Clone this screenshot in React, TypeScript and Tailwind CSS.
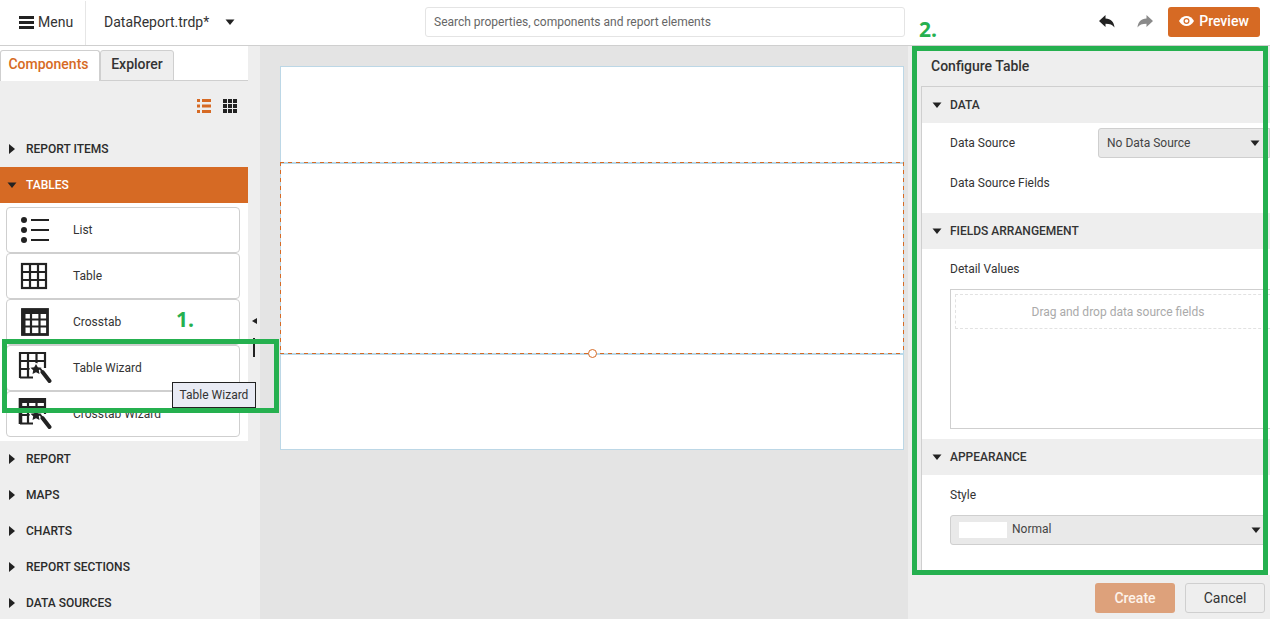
import React from "react";

const Tri = ({ dir = "down", className = "" }: { dir?: "down" | "right" | "left"; className?: string }) => (
  <svg width="10" height="10" viewBox="0 0 10 10" className={className} fill="currentColor">
    {dir === "down" && <path d="M.5 2.500h9L5 8z" />}
    {dir === "right" && <path d="M2 0v10l6-5z" />}
    {dir === "left" && <path d="M8 2v6L3 5z" />}
  </svg>
);

const GridIcon = ({ thick = false }: { thick?: boolean }) => (
  <svg width="30" height="28" viewBox="0 0 30 28" fill="none" stroke="#222" strokeWidth="2.2">
    {thick ? (
      <>
        <rect x="2.500" y="1.500" width="25" height="25" strokeWidth="2.800" />
        <path d="M2 4h26" strokeWidth="4" />
        <path d="M2 11.500h26M2 18.500h26M11 1v26M19.500 1v26" />
        <path d="M3.500 1v26" strokeWidth="4" />
      </>
    ) : (
      <>
        <rect x="2" y="2" width="24" height="24" />
        <path d="M2 10h24M2 18h24M10 2v24M18 2v24" />
      </>
    )}
  </svg>
);

const WizardIcon = ({ thick = false }: { thick?: boolean }) => (
  <svg width="34" height="34" viewBox="0 0 34 34" fill="none">
    <g stroke="#222" strokeWidth="2.200">
      {thick && <path d="M1 3.500h26" strokeWidth="5" />}
      <path d="M2 27V2h25v15M2 10h25M2 18h11M2 26.500h13M10 2v25M18.500 2v11" />
      {thick && <path d="M2.500 1v26" strokeWidth="3.500" />}
    </g>
    <circle cx="18" cy="18.500" r="6.500" fill="#fff" />
    <path d="M18 13l1.800 3.300 3.700.5-2.700 2.500.7 3.700-3.500-1.800-3.500 1.800.7-3.700-2.700-2.500 3.700-.5z" fill="#222" />
    <path d="M24.500 21l7 9" stroke="#222" strokeWidth="4" strokeLinecap="round" />
    <path d="M22 17.500l2 2.500" stroke="#222" strokeWidth="2" />
  </svg>
);

const ListIcon = () => (
  <svg width="30" height="28" viewBox="0 0 30 28" fill="#222">
    <circle cx="4" cy="4" r="3" />
    <circle cx="4" cy="14" r="3" />
    <circle cx="4" cy="24" r="3" />
    <path d="M11 3h18v2H11zM11 13h18v2H11zM11 23h18v2H11z" />
  </svg>
);

const Section = ({ label, open = false }: { label: string; open?: boolean }) => (
  <div className={`h-9 shrink-0 flex items-center text-xs font-medium ${open ? "bg-[#d66a24] text-white" : "text-[#2b2b2b]"}`}>
    <span className="w-[26px] pl-[7px] flex text-[#222]">
      <Tri dir={open ? "down" : "right"} />
    </span>
    {label}
  </div>
);

const Item = ({ icon, label }: { icon: React.ReactNode; label: string }) => (
  <div className="h-[46px] shrink-0 bg-white border border-[#cfcfcf] rounded-sm flex items-center text-xs text-[#333]">
    <div className="w-[66px] flex justify-center pr-[10px]">{icon}</div>
    {label}
  </div>
);

const PanelHead = ({ label }: { label: string }) => (
  <div className="h-9 bg-[#eeeeee] flex items-center text-xs font-medium text-[#333]">
    <span className="w-7 pl-[10px] flex text-[#222]">
      <Tri />
    </span>
    {label}
  </div>
);

export default function App() {
  return (
    <div
      className="relative w-[1270px] h-[619px] overflow-hidden bg-white flex flex-col text-[#333]"
      style={{ fontFamily: "Roboto, sans-serif" }}
    >
      {/* top bar */}
      <header className="h-[46px] shrink-0 bg-white border-b border-[#cfcfcf] flex items-center pb-[2px]">
        <div className="w-[86px] h-[44px] -mb-[2px] border-r border-[#e6e6e6] flex items-center pl-[19px] gap-[4px] text-sm text-[#333] pb-[1px]">
          <svg width="15" height="13" viewBox="0 0 15 13" fill="#222">
            <path d="M0 0h15v3H0zM0 5h15v3H0zM0 10h15v3H0z" />
          </svg>
          Menu
        </div>
        <div className="flex items-center pl-[18px] w-[339px] text-sm text-[#333]">
          <span>DataReport.trdp*</span>
          <Tri className="ml-[16px] text-[#222]" />
        </div>
        <div className="w-[480px] h-[30px] border border-[#e4e4e4] rounded-[3px] flex items-center pl-2 text-xs text-[#666]">
          Search properties, components and report elements
        </div>
        <div className="flex-1 flex items-center justify-end pr-[10px]">
          <svg width="16" height="13" viewBox="0 0 16 13" className="mr-[22px]" fill="#222">
            <path d="M6.500 0v3.500C12 3.500 15 7 15.500 12.500 13.500 9.800 11 8.800 6.500 8.800V12L0 6z" />
          </svg>
          <svg width="16" height="13" viewBox="0 0 16 13" className="mr-[15px]" fill="#8a8a8a">
            <path d="M9.500 0v3.500C4 3.500 1 7 .5 12.500 2.500 9.800 5 8.800 9.500 8.800V12L16 6z" />
          </svg>
          <div className="w-[92px] h-[30px] bg-[#d66a24] rounded-[3px] flex items-center justify-center gap-[5px] text-sm font-medium text-white pb-px">
            <svg width="15" height="10" viewBox="0 0 15 10">
              <path d="M0 5c2-3.200 4.500-5 7.500-5S13 1.800 15 5c-2 3.200-4.500 5-7.500 5S2 8.200 0 5z" fill="#fff" />
              <circle cx="7.500" cy="5" r="3" fill="#d66a24" />
              <circle cx="7.500" cy="5" r="1.800" fill="#fff" />
            </svg>
            Preview
          </div>
        </div>
      </header>

      <div className="flex-1 flex min-h-0">
        {/* left panel */}
        <aside className="w-[260px] shrink-0 bg-[#eeeeee] flex overflow-hidden">
          <div className="w-[248px] flex flex-col">
            <div className="h-[35px] shrink-0 bg-white border-b border-[#cfcfcf] flex items-end text-sm font-medium">
              <div className="h-[31px] w-[100px] bg-white border border-b-0 border-[#cfcfcf] rounded-t-[3px] -mb-px flex items-center justify-center text-[#d66a24] pb-[5px] pr-[3px]">
                Components
              </div>
              <div className="h-[31px] w-[74px] bg-[#eeeeee] border border-[#cfcfcf] rounded-t-[3px] -mb-px flex items-center justify-center text-[#333] pb-[3px]">
                Explorer
              </div>
            </div>
            <div className="h-[50px] shrink-0 flex items-center justify-end gap-[12px] pr-[11px]">
              <svg width="14" height="14" viewBox="0 0 14 14" fill="#d66a24">
                <path d="M0 0h3v3H0zM5 0h9v3H5zM0 5.500h3v3H0zM5 5.500h9v3H5zM0 11h3v3H0zM5 11h9v3H5z" />
              </svg>
              <svg width="14" height="14" viewBox="0 0 14 14" fill="#222">
                <path d="M0 0h4v4H0zM5 0h4v4H5zM10 0h4v4h-4zM0 5h4v4H0zM5 5h4v4H5zM10 5h4v4h-4zM0 10h4v4H0zM5 10h4v4H5zM10 10h4v4h-4z" />
              </svg>
            </div>
            <Section label="REPORT ITEMS" />
            <Section label="TABLES" open />
            <div className="bg-white h-[238px] shrink-0 pl-[6px] pr-[8px] pt-1 flex flex-col">
              <Item icon={<ListIcon />} label="List" />
              <Item icon={<GridIcon />} label="Table" />
              <Item icon={<GridIcon thick />} label="Crosstab" />
              <Item icon={<WizardIcon />} label="Table Wizard" />
              <Item icon={<WizardIcon thick />} label="Crosstab Wizard" />
            </div>
            <Section label="REPORT" />
            <Section label="MAPS" />
            <Section label="CHARTS" />
            <Section label="REPORT SECTIONS" />
            <Section label="DATA SOURCES" />
          </div>
          <div className="flex-1 flex flex-col items-center pt-[270px] text-[#222]">
            <Tri dir="left" />
            <div className="w-0.5 h-[19px] bg-[#222] mt-[12px]" />
          </div>
        </aside>

        {/* canvas */}
        <main className="w-[648px] shrink-0 bg-[#e4e4e4] pl-5 pt-5">
          <div className="w-[624px] h-[384px] bg-white border border-[#bcd7e6] pt-[95px]">
            <div className="relative h-[192px] -mx-px">
              <div className="absolute inset-x-0 top-0 h-[2px] bg-[#b9d9ea]" />
              <div className="absolute inset-x-0 top-0 h-px bg-[repeating-linear-gradient(90deg,#d66a24_0,#d66a24_4px,transparent_4px,transparent_8px)]" />
              <div className="absolute inset-y-0 left-0 w-px bg-[repeating-linear-gradient(180deg,#d66a24_0,#d66a24_4px,transparent_4px,transparent_8px)]" />
              <div className="absolute inset-y-0 right-0 w-px bg-[repeating-linear-gradient(180deg,#d66a24_0,#d66a24_4px,transparent_4px,transparent_8px)]" />
              <div className="absolute inset-x-0 -bottom-px h-[2px] bg-[#b9d9ea]" />
              <div className="absolute inset-x-0 bottom-0 h-px bg-[repeating-linear-gradient(90deg,#d66a24_0,#d66a24_4px,transparent_4px,transparent_8px)]" />
              <div className="absolute left-[308px] -bottom-[4px] w-[9px] h-[9px] rounded-full bg-white border border-[#d66a24]" />
            </div>
          </div>
        </main>

        {/* right panel */}
        <aside className="w-[362px] shrink-0 min-w-0 overflow-hidden bg-[#eeeeee] flex flex-col">
          <div className="h-[41px] ml-[13px] border-b border-[#cfcfcf] flex items-center pl-[10px] pb-px text-sm font-medium text-[#333]">
            Configure Table
          </div>
          <div className="h-[488px] ml-[13px] bg-white border-l border-[#cfcfcf] overflow-hidden">
            <PanelHead label="DATA" />
            <div className="h-[90px] pl-7 text-xs">
              <div className="h-[39px] flex items-start pt-[5px]">
                <span className="w-[148px] h-[30px] flex items-center">Data Source</span>
                <div className="flex-1 h-[30px] bg-[#e9e9e9] border border-[#cfcfcf] rounded-l-[3px] flex items-center pl-2 pr-[9px] justify-between text-[#444]">
                  No Data Source
                  <Tri className="text-[#222]" />
                </div>
              </div>
              <div className="mt-[11px] leading-[20px]">Data Source Fields</div>
            </div>
            <PanelHead label="FIELDS ARRANGEMENT" />
            <div className="h-[190px] pl-7 text-xs">
              <div className="h-[40px] flex items-center">Detail Values</div>
              <div className="h-[140px] w-[336px] border border-[#cfcfcf] p-[4px]">
                <div className="h-[35px] border border-dashed border-[#e2e2e2] flex items-center justify-center text-[#aaaaaa]">
                  Drag and drop data source fields
                </div>
              </div>
            </div>
            <PanelHead label="APPEARANCE" />
            <div className="pl-7 pr-[4px] text-xs">
              <div className="h-[40px] flex items-center">Style</div>
              <div className="h-[30px] bg-[#e9e9e9] border border-[#cfcfcf] rounded-[3px] flex items-center pl-2 pr-[4px] text-[#444]">
                <span className="w-12 h-4 bg-white mr-[5px]" />
                <span className="-translate-y-px">Normal</span>
                <Tri className="ml-auto text-[#222]" />
              </div>
            </div>
          </div>
          <div className="flex-1 flex items-center justify-end gap-[10px] pr-[5px] pt-[2px] text-sm">
            <div className="w-20 h-[30px] bg-[#dda17b] rounded-[3px] flex items-center justify-center font-medium text-[#fdf3ea]">
              Create
            </div>
            <div className="w-20 h-[30px] bg-[#eeeeee] border border-[#cfcfcf] rounded-[3px] flex items-center justify-center text-[#333]">
              Cancel
            </div>
          </div>
        </aside>
      </div>

      {/* annotations over the picture */}
      <div className="absolute left-[172px] top-[382px] w-[84px] h-[26px] bg-[#e9ebf4] border border-[#222] flex items-center justify-center text-xs text-[#333]">
        Table Wizard
      </div>
      <div className="absolute left-[2px] top-[339px] w-[277px] h-[74px] border-[5px] border-[#25b04f]" />
      <div className="absolute left-[912px] top-[46px] w-[356px] h-[529px] border-[5px] border-[#25b04f]" />
      <div className="absolute left-[176px] top-[306px] text-[21px] font-bold leading-[26px] text-[#25b04f]" style={{ fontFamily: "'Open Sans', sans-serif" }}>
        1.
      </div>
      <div className="absolute left-[919px] top-[16px] text-[21px] font-bold leading-[26px] text-[#25b04f]" style={{ fontFamily: "'Open Sans', sans-serif" }}>
        2.
      </div>
    </div>
  );
}
